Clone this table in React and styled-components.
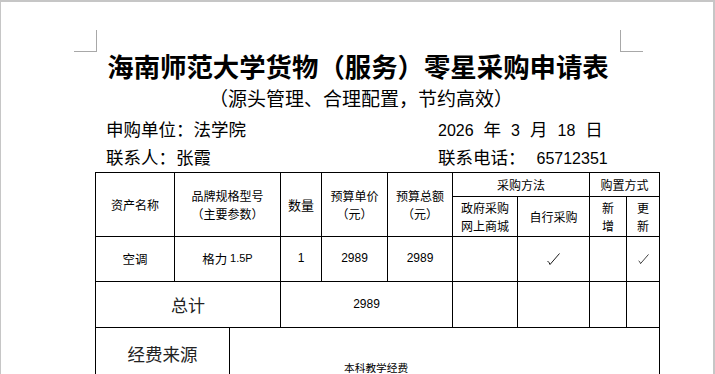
import styled, { createGlobalStyle } from "styled-components";

const CJK = `"Noto Sans CJK SC", sans-serif`;
const NUM = `"Liberation Sans", "Noto Sans CJK SC", sans-serif`;

const GlobalStyle = createGlobalStyle`
  html, body {
    margin: 0;
    padding: 0;
    background: #ffffff;
  }
  body {
    font-family: ${CJK};
    color: #000;
  }
`;

const Page = styled.div`
  box-sizing: border-box;
  width: 715px;
  height: 374px;
  overflow: hidden;
  border-top: 2px solid #c6c6c6;
  border-left: 1px solid #c6c6c6;
  border-right: 2px solid #c6c6c6;
  padding: 49px 0 0 95px;
  background: #fff;
`;

const Content = styled.div`
  position: relative;
  width: 524px;

  &::before,
  &::after {
    content: "";
    position: absolute;
    top: -21px;
    width: 23px;
    height: 22px;
    box-sizing: border-box;
    border-bottom: 1px solid #a8a8a8;
  }
  &::before {
    left: -22px;
    border-right: 1px solid #a8a8a8;
  }
  &::after {
    left: 524px;
    border-left: 1px solid #a8a8a8;
  }
`;

const Title = styled.h1`
  margin: 0;
  height: 30px;
  line-height: 30px;
  font-size: 26.4px;
  font-weight: 700;
  text-align: center;
  white-space: nowrap;
`;

const Subtitle = styled.div`
  height: 34px;
  line-height: 34px;
  font-size: 19px;
  text-align: center;
  padding-left: 6px;
  white-space: nowrap;
`;

const InfoGrid = styled.div`
  display: grid;
  grid-template-columns: 332px auto;
  grid-template-rows: 28px 29px;
  padding-left: 10px;
  font-size: 17.5px;
`;

const InfoCell = styled.div`
  display: flex;
  align-items: baseline;
  gap: ${(p) => p.$gap || 0}px;
  line-height: 28px;
  white-space: nowrap;
`;

const Num = styled.span`
  font-family: ${NUM};
  font-size: 16px;
`;

const Table = styled.div`
  display: grid;
  width: 565px;
  margin-left: -1px;
  box-sizing: border-box;
  padding: 1px;
  gap: 1px;
  background: #000;
  grid-template-columns: 78px 54px 50px 40px 65px 64px 64px 71px 36px 32px;
  grid-template-rows: 23px 39px 44px 45px 80px;
`;

const Cell = styled.div`
  grid-column: ${(p) => p.$col};
  grid-row: ${(p) => p.$row};
  background: #fff;
  display: flex;
  align-items: ${(p) => p.$align || "center"};
  justify-content: ${(p) => p.$justify || "center"};
  padding: ${(p) => p.$pad || "0"};
  text-align: center;
  font-size: ${(p) => p.$size || 12}px;
  line-height: 17.5px;
  color: ${(p) => p.$color || "#000"};
  white-space: nowrap;
`;

const CellNum = styled.span`
  font-family: ${NUM};
  font-size: ${(p) => p.$size || 12}px;
`;

const Check = ({ size = 13 }) => (
  <svg width={size} height={size - 1} viewBox="0 0 13 12" fill="none">
    <path
      d="M0.5 8 L2 9.5 L3 11.5 L12.5 0.5"
      stroke="#000"
      strokeWidth="0.9"
      strokeLinejoin="round"
    />
  </svg>
);

export default function App() {
  return (
    <>
      <GlobalStyle />
      <Page>
        <Content>
          <Title>海南师范大学货物（服务）零星采购申请表</Title>
          <Subtitle>（源头管理、合理配置，节约高效）</Subtitle>
          <InfoGrid>
            <InfoCell>申购单位：法学院</InfoCell>
            <InfoCell $gap={10}>
              <Num>2026</Num>
              <span>年</span>
              <Num>3</Num>
              <span>月</span>
              <Num>18</Num>
              <span>日</span>
            </InfoCell>
            <InfoCell>联系人：张霞</InfoCell>
            <InfoCell $gap={11}>
              <span>联系电话：</span>
              <Num>65712351</Num>
            </InfoCell>
          </InfoGrid>
          <Table>
            <Cell $col="1 / 2" $row="1 / 3">资产名称</Cell>
            <Cell $col="2 / 4" $row="1 / 3">
              品牌规格型号
              <br />
              （主要参数）
            </Cell>
            <Cell $col="4 / 5" $row="1 / 3" $size={13}>数量</Cell>
            <Cell $col="5 / 6" $row="1 / 3">
              预算单价
              <br />
              （元）
            </Cell>
            <Cell $col="6 / 7" $row="1 / 3">
              预算总额
              <br />
              （元）
            </Cell>
            <Cell $col="7 / 9" $row="1 / 2">采购方法</Cell>
            <Cell $col="9 / 11" $row="1 / 2">购置方式</Cell>
            <Cell $col="7 / 8" $row="2 / 3">
              政府采购
              <br />
              网上商城
            </Cell>
            <Cell $col="8 / 9" $row="2 / 3">自行采购</Cell>
            <Cell $col="9 / 10" $row="2 / 3">
              新<br />增
            </Cell>
            <Cell $col="10 / 11" $row="2 / 3">
              更<br />新
            </Cell>

            <Cell $col="1 / 2" $row="3 / 4" $size={12.5}>空调</Cell>
            <Cell $col="2 / 4" $row="3 / 4" $size={12.5}>
              格力&nbsp;<CellNum $size={11}>1.5P</CellNum>
            </Cell>
            <Cell $col="4 / 5" $row="3 / 4"><CellNum>1</CellNum></Cell>
            <Cell $col="5 / 6" $row="3 / 4"><CellNum>2989</CellNum></Cell>
            <Cell $col="6 / 7" $row="3 / 4"><CellNum>2989</CellNum></Cell>
            <Cell $col="7 / 8" $row="3 / 4" />
            <Cell $col="8 / 9" $row="3 / 4"><Check size={13} /></Cell>
            <Cell $col="9 / 10" $row="3 / 4" />
            <Cell $col="10 / 11" $row="3 / 4"><Check size={11} /></Cell>

            <Cell $col="1 / 4" $row="4 / 5" $size={17} $color="#222">总计</Cell>
            <Cell $col="4 / 7" $row="4 / 5"><CellNum>2989</CellNum></Cell>
            <Cell $col="7 / 8" $row="4 / 5" />
            <Cell $col="8 / 9" $row="4 / 5" />
            <Cell $col="9 / 10" $row="4 / 5" />
            <Cell $col="10 / 11" $row="4 / 5" />

            <Cell $col="1 / 3" $row="5 / 6" $size={17.5} $color="#222" $align="flex-start" $pad="17px 0 0 0">
              经费来源
            </Cell>
            <Cell $col="3 / 11" $row="5 / 6" $size={10.7} $align="flex-start" $justify="flex-start" $pad="31px 0 0 114px">
              本科教学经费
            </Cell>
          </Table>
        </Content>
      </Page>
    </>
  );
}
